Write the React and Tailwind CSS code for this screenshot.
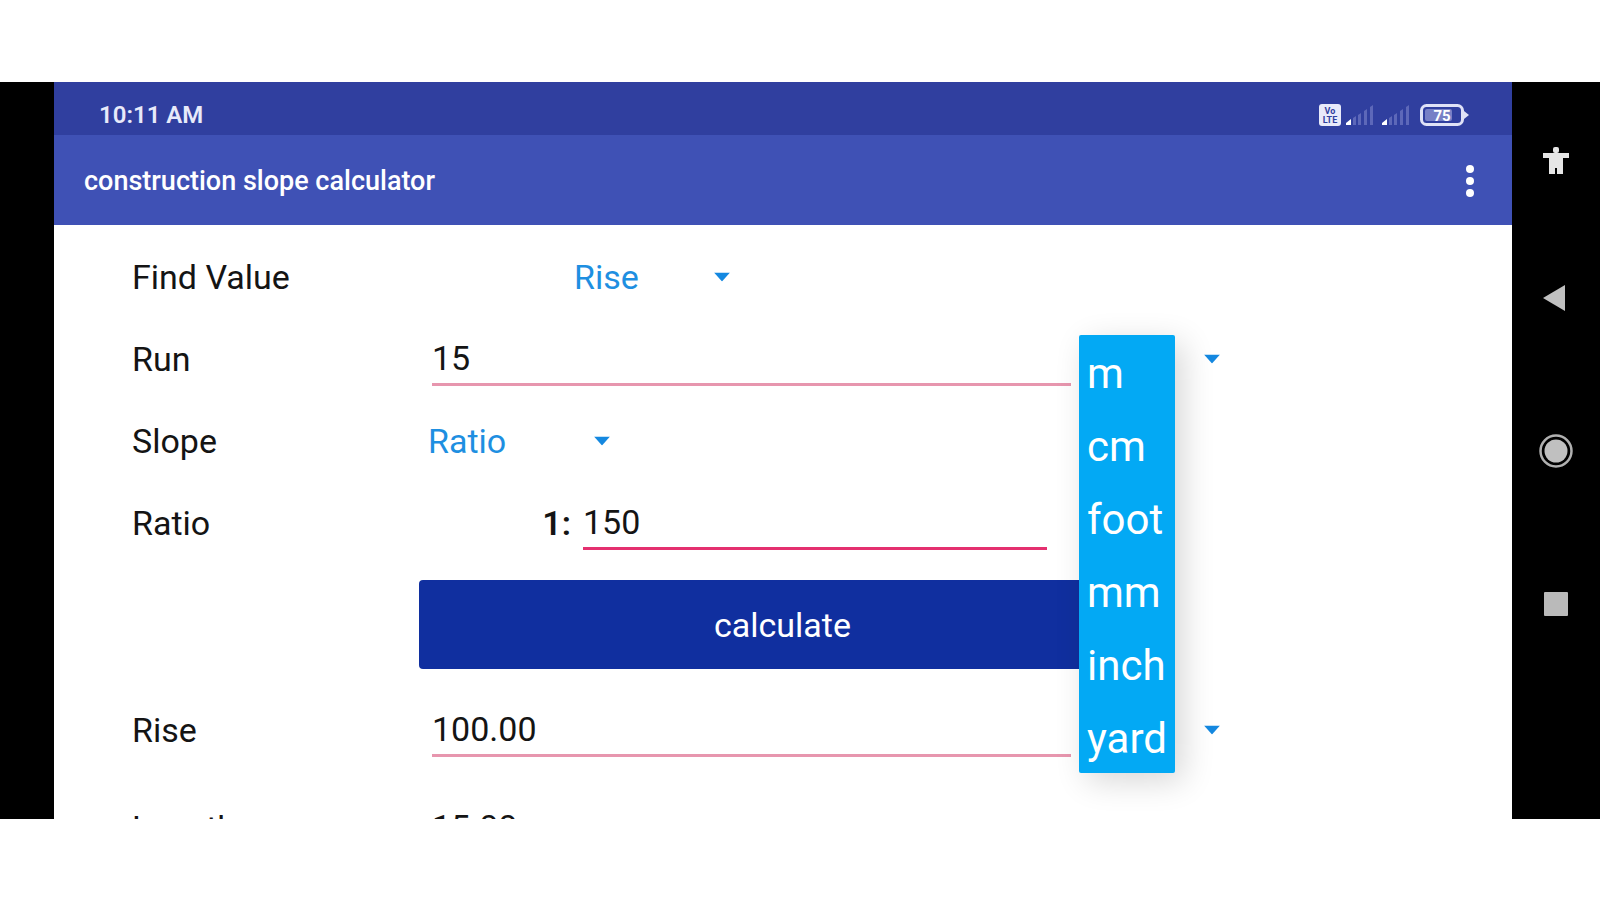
import React, { useState } from 'react';

const UNITS = ['m', 'cm', 'foot', 'mm', 'inch', 'yard'];

function Spinner({ id, label, value, onChange, options, className }) {
  return (
    <div className={`relative shrink-0 ${className}`}>
      <select
        id={id}
        aria-label={label}
        value={value}
        onChange={(e) => onChange(e.target.value)}
        className="w-full h-12 appearance-none bg-transparent text-[#1e8fe1] outline-none"
      >
        {options.map((option) => (
          <option key={option} value={option}>{option}</option>
        ))}
      </select>
      <svg
        viewBox="0 0 16 9"
        className="absolute right-0 top-1/2 -translate-y-1/2 w-4 h-[9px] fill-[#1488e0] pointer-events-none"
      >
        <path d="M0 0h16L8 9z" />
      </svg>
    </div>
  );
}

function Field({ id, label, value, onChange, active }) {
  return (
    <input
      id={id}
      aria-label={label}
      value={value}
      onChange={(e) => onChange(e.target.value)}
      className={`flex-1 min-w-0 h-[54px] bg-transparent outline-none border-b-[3px] ${
        active ? 'border-[#e4306f]' : 'border-[#e796ae]'
      }`}
    />
  );
}

function Row({ label, htmlFor, children, className = '' }) {
  return (
    <div className={`flex items-center h-[82px] ${className}`}>
      <label htmlFor={htmlFor} className="w-[300px] shrink-0">{label}</label>
      {children}
    </div>
  );
}

function Signal() {
  return (
    <svg viewBox="0 0 28 22" className="w-7 h-[22px]">
      <path d="M0 21v-2l5-4v6z" fill="#fff" />
      <g fill="#5d68b9">
        <path d="M7 21v-7l3-2v9z" />
        <path d="M12 21V11l3-2v12z" />
        <path d="M18 21V7l3-2v16z" />
        <path d="M24 21V3l3-2v20z" />
      </g>
    </svg>
  );
}

function StatusBar() {
  return (
    <div className="flex items-center justify-between h-[53px] pt-3 pl-[45px] pr-[43px] bg-[#303f9f] text-[#e8eafa]">
      <span className="text-2xl font-semibold">10:11 AM</span>
      <div className="flex items-center">
        {/* VoLTE badge */}
        <svg viewBox="0 0 22 22" className="w-[22px] h-[22px] mr-[5px]">
          <rect width="22" height="22" rx="3" fill="#e8eafa" />
          <g fontFamily="Roboto, sans-serif" fontWeight="700" fontSize="9" fill="#303f9f" textAnchor="middle">
            <text x="11" y="10">Vo</text>
            <text x="11" y="19">LTE</text>
          </g>
        </svg>
        <Signal />
        <div className="w-2" />
        <Signal />
        {/* battery */}
        <svg viewBox="0 0 49 22" className="w-[49px] h-[22px] ml-[10px]">
          <rect x="1.5" y="1.5" width="41" height="19" rx="5" fill="none" stroke="#dfe2f7" strokeWidth="3" />
          <rect x="5" y="5" width="27" height="12" rx="2" fill="#7780c6" />
          <path d="M44 7l5 4-5 4z" fill="#dfe2f7" />
          <text x="22" y="17" fontFamily="Roboto, sans-serif" fontWeight="700" fontSize="15" fill="#fff" textAnchor="middle">75</text>
        </svg>
      </div>
    </div>
  );
}

function NavBar() {
  return (
    <nav className="w-[88px] shrink-0 flex flex-col items-center pt-[63px] bg-black">
      <button aria-label="Accessibility" className="w-[34px] h-[34px]">
        <svg viewBox="0 0 34 34" fill="#e6e6e6">
          <rect x="14" y="2" width="6" height="6" rx="2" />
          <path d="M4 8h26v5h-6v16h-6v-6h-2v6h-6V13H4z" />
        </svg>
      </button>
      <button aria-label="Back" className="w-[34px] h-[34px] mt-[102px]">
        <svg viewBox="0 0 34 34" fill="#c0c0c0">
          <path d="M4 17L26 4v26z" />
        </svg>
      </button>
      <button aria-label="Home" className="w-[34px] h-[34px] mt-[119px]">
        <svg viewBox="0 0 34 34">
          <circle cx="17" cy="17" r="15.5" fill="none" stroke="#b0b0b0" strokeWidth="2.5" />
          <circle cx="17" cy="17" r="11.5" fill="#c0c0c0" />
        </svg>
      </button>
      <button aria-label="Recents" className="w-[34px] h-[34px] mt-[119px]">
        <svg viewBox="0 0 34 34">
          <rect x="5" y="5" width="24" height="24" rx="1" fill="#bababa" />
        </svg>
      </button>
    </nav>
  );
}

export default function App() {
  const [find, setFind] = useState('Rise');
  const [run, setRun] = useState('15');
  const [runUnit, setRunUnit] = useState('m');
  const [slopeType, setSlopeType] = useState('Ratio');
  const [ratio, setRatio] = useState('150');
  const [rise, setRise] = useState('100.00');
  const [riseUnit, setRiseUnit] = useState('mm');
  const [length, setLength] = useState('15.00');
  const [menuOpen, setMenuOpen] = useState(true);

  const calculate = () => {
    const result = (Number(run) / Number(ratio)) * 1000;
    if (Number.isFinite(result)) setRise(result.toFixed(2));
  };

  const pickUnit = (unit) => {
    setRunUnit(unit);
    setMenuOpen(false);
  };

  return (
    <div className="h-screen flex flex-col pt-[82px] pb-[81px] bg-white font-['Roboto',sans-serif]">
      <div className="flex-1 min-h-0 flex overflow-hidden">
        <div className="w-[54px] shrink-0 bg-black" />

        <div className="flex-1 min-w-0 overflow-hidden">
          <StatusBar />

          {/* APP BAR */}
          <header className="flex items-center justify-between h-[90px] pt-0.5 pl-[30px] pr-[33px] bg-[#3f51b5] text-white">
            <h1 className="text-[27px] font-medium">construction slope calculator</h1>
            <button aria-label="More options">
              <svg viewBox="0 0 18 34" className="w-[18px] h-[34px] fill-white">
                <circle cx="9" cy="5" r="4" />
                <circle cx="9" cy="17" r="4" />
                <circle cx="9" cy="29" r="4" />
              </svg>
            </button>
          </header>

          {/* FORM */}
          <main className="pt-[11px] pl-[78px] pr-[292px] text-[34px] text-[#141414]">
            <Row label="Find Value" htmlFor="find">
              <Spinner
                id="find"
                value={find}
                onChange={setFind}
                options={['Rise', 'Run', 'Slope']}
                className="w-[156px] ml-[142px]"
              />
            </Row>

            <Row label="Run" htmlFor="run">
              <Field id="run" value={run} onChange={setRun} />
              <div className="relative ml-2">
                <Spinner
                  label="Run unit"
                  value={runUnit}
                  onChange={setRunUnit}
                  options={UNITS}
                  className="w-[141px]"
                />
                {menuOpen && (
                  <ul
                    role="listbox"
                    aria-label="Units"
                    className="absolute left-0 top-px z-10 w-24 rounded-xs bg-[#03a9f4] text-white text-[42px] shadow-[8px_8px_32px_rgba(0,0,0,0.16)]"
                  >
                    {UNITS.map((unit) => (
                      <li key={unit} role="option" aria-selected={unit === runUnit}>
                        <button
                          onClick={() => pickUnit(unit)}
                          className="block w-full h-[73px] pt-1.5 pl-2 text-left leading-none"
                        >
                          {unit}
                        </button>
                      </li>
                    ))}
                  </ul>
                )}
              </div>
            </Row>

            <Row label="Slope" htmlFor="slope">
              <Spinner
                id="slope"
                value={slopeType}
                onChange={setSlopeType}
                options={['Ratio', 'Percent', 'Degree']}
                className="w-[182px] -ml-1"
              />
            </Row>

            <Row label="Ratio" htmlFor="ratio" className="pr-[173px]">
              <span className="w-[151px] pr-3 text-right font-semibold">1:</span>
              <Field id="ratio" value={ratio} onChange={setRatio} active />
            </Row>

            <button
              onClick={calculate}
              className="block h-[89px] w-[calc(100%-361px)] ml-[287px] mt-4 pt-0.5 rounded-sm bg-[#102f9f] text-white"
            >
              calculate
            </button>

            <Row label="Rise" htmlFor="rise" className="mt-5">
              <Field id="rise" value={rise} onChange={setRise} />
              <Spinner
                label="Rise unit"
                value={riseUnit}
                onChange={setRiseUnit}
                options={UNITS}
                className="w-[141px] ml-2"
              />
            </Row>

            <Row label="Length" htmlFor="length" className="mt-4">
              <Field id="length" value={length} onChange={setLength} />
            </Row>
          </main>
        </div>

        <NavBar />
      </div>
    </div>
  );
}
